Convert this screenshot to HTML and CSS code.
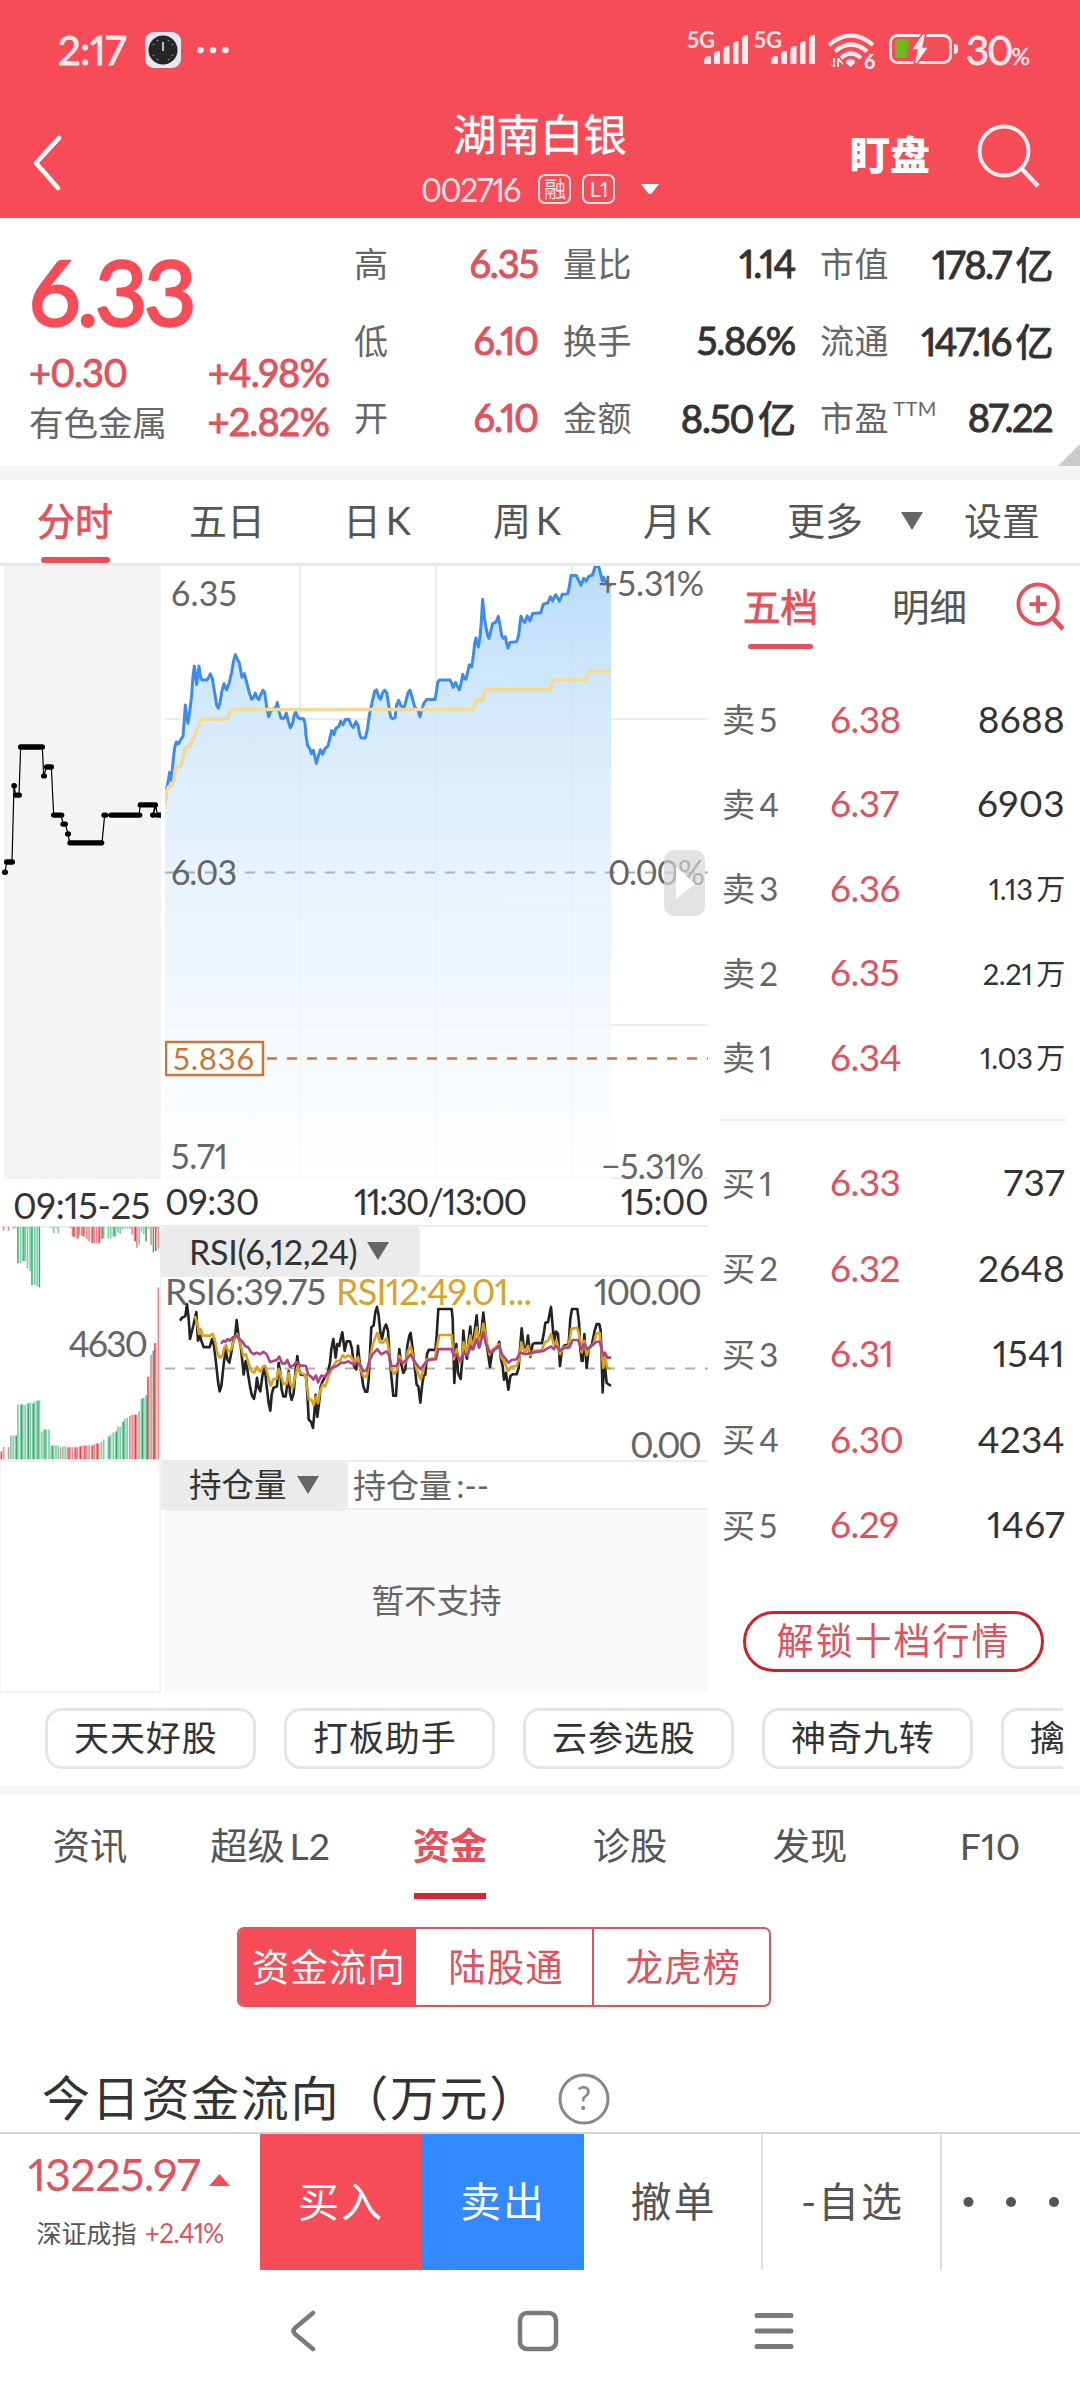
FILE: index.html
```html
<!DOCTYPE html>
<html lang="zh-CN">
<head>
<meta charset="utf-8">
<title>湖南白银 002716</title>
<link rel="stylesheet" href="styles.css">
</head>
<body>
<div class="app">
  <header class="header">
    <div class="status">
      <span class="clock">2:17</span>
      <svg class="app-icon" width="36" height="36" viewBox="0 0 36 36"><rect width="36" height="36" rx="9" fill="#e4e8f2"/><circle cx="18" cy="18" r="14.5" fill="#262626"/><path d="M18 10v9" stroke="#bbb" stroke-width="2"/><g fill="#999"><circle cx="12.500" cy="8.500" r=".8"/><circle cx="23.500" cy="8.500" r=".8"/><circle cx="8.500" cy="12.500" r=".8"/><circle cx="27.500" cy="12.500" r=".8"/><circle cx="8.500" cy="23.500" r=".8"/><circle cx="27.500" cy="23.500" r=".8"/><circle cx="12.500" cy="27.500" r=".8"/><circle cx="23.500" cy="27.500" r=".8"/></g></svg>
      <svg class="more-dots" width="32" height="8" viewBox="0 0 32 8" fill="#ffe9eb"><circle cx="3.500" cy="4" r="3.300"/><circle cx="16" cy="4" r="3.300"/><circle cx="28.500" cy="4" r="3.300"/></svg>
      <svg class="indicators" width="276" height="40" viewBox="684 31 276 40" fill="#ffe9eb">
        <text x="687" y="49" class="net" textLength="28" lengthAdjust="spacingAndGlyphs">5G</text>
        <path id="bars" d="M704 65v-4q0-2 3-4h3q1 0 1 1v7zM714 65V54q2-2 4-2h2v13zM723.500 65V49q2-2 4-2h2v18zM733 65V44q2-2 4-2h1.500v23zM742 65V39q2-3 4-3h2v29z"/>
        <text x="754" y="49" class="net" textLength="28" lengthAdjust="spacingAndGlyphs">5G</text>
        <use href="#bars" x="67"/>
        <g fill="none" stroke="#ffe9eb" stroke-width="4.200"><path d="M829 46q22-19 44 0"/><path d="M835 52.500q16-14 32 0"/><path d="M841 59q10-9 20 0"/></g>
        <path d="M846 62q5-4 9 0v2l-4.500 4-4.500-4z"/>
        <path d="M828 62l5 5V59h2v9h-2zM837 68v-9h2l4 5v2l-4-4v6z"/>
        <text x="864" y="70" class="wifi6">6</text>
        <rect x="890.500" y="36.500" width="60" height="27" rx="7" fill="none" stroke="#ffe9eb" stroke-width="3"/>
        <path d="M898 40h12l-2 5 2 1-4 7 3 2-4 4h-7q-3 0-3-3V43q0-3 3-3z" fill="#6cb81d"/>
        <path d="M922 35l-11 16h6l-3 14h3l12-17h-6l3-13z" stroke="#f54c58" stroke-width="1.500"/>
        <path d="M954 45q4 0 4 3v4q0 3-4 3z"/>
      </svg>
      <span class="battery">30<small>%</small></span>
    </div>
    <div class="titlebar">
      <svg class="back" width="32" height="56" viewBox="0 0 32 56"><path d="M27 3L4 28l22 25" fill="none" stroke="#fff" stroke-width="4.500" stroke-linecap="round" stroke-linejoin="round"/></svg>
      <div class="title">
        <h1>湖南白银</h1>
        <div class="code"><span>002716</span><b>融</b><b>L1</b><svg width="18" height="11" viewBox="0 0 18 11"><path d="M0 0h18l-7 9q-2 2-4 0z" fill="#fff"/></svg></div>
      </div>
      <span class="watch">盯盘</span>
      <svg class="search" width="64" height="64" viewBox="0 0 64 64" fill="none" stroke="#fff0f1"><circle cx="27" cy="27" r="24.500" stroke-width="3.800"/><path d="M44 44l17 18" stroke-width="4.500"/></svg>
    </div>
  </header>

  <section class="quote">
    <div class="price">
      <div class="last">6.33</div>
      <div class="pair"><span>+0.30</span><span>+4.98%</span></div>
      <div class="pair"><em>有色金属</em><span>+2.82%</span></div>
    </div>
    <dl class="stats c1"><div><dt>高</dt><dd>6.35</dd></div><div><dt>低</dt><dd>6.10</dd></div><div><dt>开</dt><dd>6.10</dd></div></dl>
    <dl class="stats c2"><div><dt>量比</dt><dd>1.14</dd></div><div><dt>换手</dt><dd>5.86%</dd></div><div><dt>金额</dt><dd>8.50亿</dd></div></dl>
    <dl class="stats c3"><div><dt>市值</dt><dd>178.7亿</dd></div><div><dt>流通</dt><dd>147.16亿</dd></div><div><dt>市盈<sup>TTM</sup></dt><dd>87.22</dd></div></dl>
    <i class="corner"></i>
  </section>

  <nav class="periods">
    <a class="on">分时</a><a>五日</a><a>日K</a><a>周K</a><a>月K</a><a>更多</a>
    <svg class="caret" width="22" height="18" viewBox="0 0 22 18"><path d="M0 0h22L11 18z" fill="#666"/></svg>
    <a class="set">设置</a>
  </nav>

  <main class="market">
    <div class="pre">
      <svg width="161" height="613" viewBox="0 566 161 613">
        <rect x="4" y="566" width="157" height="613" fill="#f4f4f4"/>
        <g transform="translate(0 560) scale(.33333 .40816)" class="auction">
          <path class="thin" d="M15 765L20 740H36L42 553L47 576H57L62 458H127L131 529L140 507H154L161 625H183L190 647H196L204 671L209 693H306L314 625H417L421 600H465L459 625L468 602L472 625H482"/>
          <path class="thick" d="M14 765h2M20 740h17M42 553h1M47 576h11M62 458h65M131 529h2M140 507h14M161 625h24M189 647h7M203 671h2M210 693h95M312 625h5M333 625h86M421 600h45M458 625h2M472 625h10"/>
        </g>
      </svg>
      <div class="pre-time">09:15-25</div>
      <svg class="volume" width="161" height="235" viewBox="0 1225 161 235">
        <path d="M0 1226h161" stroke="#ececec" stroke-width="2"/>
        <g transform="translate(0 1170) scale(.33333 .33806)" class="vol">
          <path class="g" d="M33 858V787M40 858V787M47 858V787M54 858V695M62 858V695M69 858V695M76 858V695M83 858V692M91 858V689M98 858V692M105 858V686M112 858V683M119 858V683M126 858V775M133 858V769M140 858V769M148 858V769M155 858V817M162 858V817M169 858V817M176 858V817M190 858V820M197 858V820M306 858V806M313 858V799M327 858V790M334 858V784M342 858V778M349 858V775M356 858V760M363 858V760M370 858V746M377 858V737M384 858V734M420 858V716M427 858V677M434 858V675M441 858V667M463 858V535"/>
          <path class="g" d="M40 166v6M47 166v4M54 166V274M62 166V274M69 166V268M76 166V268M83 166V290M91 166V298M98 166V340M105 166V338M112 166V343M119 166V346M155 166v4M162 166V185M169 166v4M176 166V185M313 166V201M327 166V201M334 166V201M342 166V195M349 166V195M356 166V183M363 166V187M370 166V175M377 166V170M384 166V170M420 166V219M427 166V180M434 166V187M441 166V209M463 166V242"/>
          <path class="r" d="M4 858V835M11 858V821M26 858V821M183 858V822M204 858V822M211 858V822M218 858V822M226 858V822M233 858V822M240 858V820M247 858V817M254 858V817M262 858V817M269 858V817M277 858V817M284 858V814M291 858V811M298 858V811M392 858V728M399 858V725M406 858V725M413 858V725M449 858V612M456 858V547M470 858V512M478 858V346"/>
          <path class="r" d="M11 166V178M26 166V178M213 166v4M219 166V195M226 166V198M233 166V201M240 166V192M247 166V192M254 166V195M262 166V203M269 166V210M277 166V215M284 166V215M291 166V215M298 166V215M306 166V203M392 166V172M399 166V189M406 166V209M413 166V228M449 166V172M456 166V219M470 166V238M478 166V231"/>
          <path class="gd" d="M50 858V787M65 858V695M86 858V692M101 858V692M115 858V683M136 858V769M158 858V817M330 858V790M352 858V775M373 858V746M430 858V677M444 858V667M463 858V535M54 166V274M72 166V268M96 166V340M119 166V346M310 166V201M345 166V195M441 166V209M463 166V242"/>
          <path class="rd" d="M4 858V835M208 858V822M229 858V822M243 858V820M257 858V817M280 858V817M294 858V811M409 858V725M446 858V612M467 858V512M222 166V195M236 166V201M251 166V195M280 166V215M301 166V215M409 166V209M470 166V238"/>
        </g>
        <text x="69" y="1357" class="axis" font-size="36" textLength="80">4630</text>
      </svg>
      <div class="pre-blank"></div>
    </div>

    <div class="charts">
      <svg width="543" height="613" viewBox="165 566 543 613">
        <defs><linearGradient id="area" x1="0" y1="15" x2="0" y2="1517" gradientUnits="userSpaceOnUse"><stop offset="0" stop-color="#b4d9f6" stop-opacity=".92"/><stop offset=".25" stop-color="#cfe7fc" stop-opacity=".86"/><stop offset=".5" stop-color="#e3f1fd" stop-opacity=".84"/><stop offset=".75" stop-color="#f1f8fe" stop-opacity=".82"/><stop offset="1" stop-color="#ffffff" stop-opacity=".75"/></linearGradient></defs>
        <path d="M300 566v613M436 566v613M572 566v613M165 719h543M165 1025h543M165 1178h543" stroke="#ececec" stroke-width="2" fill="none"/>
        <g transform="translate(0 560) scale(.33333 .40816)">
          <path fill="url(#area)" d="M495 600L505 540L509 520L514 540L519 495L529 446L536 450L549 432L556 355L564 400L570 365L583 260L590 305L597 260L606 294H620L631 279L637 290L650 355L655 363L660 350L672 303L680 318L695 275L706 232L718 252L726 287L733 278L755 341L766 326L776 342L789 319L806 384L832 349L843 388H852L859 375L871 411L887 372L900 389H911L923 455L949 498L961 465L968 476L984 456L995 418L1036 391L1046 390L1060 410L1068 396L1084 436H1096L1116 350L1124 322L1142 341L1154 319L1172 385L1185 386L1196 344L1212 362L1230 319L1260 384L1280 342H1305L1318 294H1350L1360 312L1378 318L1388 280L1398 292L1408 257L1415 262L1428 191L1435 213L1448 96L1467 192L1478 156L1495 138L1510 192L1524 216L1530 202L1550 200L1563 138L1574 153L1598 131L1622 129L1630 108L1678 101L1687 84H1703L1713 38H1729L1743 62L1785 17H1796L1807 52L1833 64V1517H495Z"/>
          <path class="line" d="M495 600L500 560L505 540L509 520L514 540L519 495L524 460L529 446L536 450L542 440L549 432L553 390L556 355L560 385L564 400L570 365L575 330L579 285L583 260L590 305L597 260L601 285L606 294H620L626 288L631 279L637 290L643 320L650 355L655 363L660 350L666 320L672 303L680 318L688 300L695 275L700 250L706 232L712 243L718 252L722 270L726 287L733 278L740 300L748 325L755 341L760 338L766 326L771 337L776 342L782 330L789 319L794 325L800 360L806 384L812 370L820 366L828 360L832 349L837 370L843 388H852L859 375L864 393L871 411L878 400L882 382L887 372L893 385L900 389H911L915 400L918 430L923 455L930 463L934 475L940 466L949 498L955 480L961 465L968 476L975 462L984 456L990 435L995 418L1002 428L1008 412L1016 408L1022 395L1029 404L1036 391L1046 390L1054 405L1060 410L1068 396L1074 405L1080 430L1084 436H1096L1102 415L1108 380L1116 350L1124 322L1130 318L1136 335L1142 341L1148 325L1154 319L1160 325L1166 355L1172 385L1178 389L1185 386L1190 355L1196 344L1203 358L1212 362L1218 345L1224 325L1230 319L1236 335L1244 360L1254 368L1260 384L1266 365L1272 350L1280 342H1305L1309 325L1313 300L1318 294H1350L1355 302L1360 312L1367 300L1372 310L1378 318L1384 300L1388 280L1393 290L1398 292L1403 275L1408 257L1415 262L1420 235L1424 205L1428 191L1435 213L1440 190L1444 150L1448 96L1453 140L1458 165L1463 185L1467 192L1472 175L1478 156L1488 152L1495 138L1500 160L1505 185L1510 192L1516 188L1520 205L1524 216L1530 202L1550 200L1556 185L1560 155L1563 138L1568 148L1574 153L1582 137L1590 149L1598 131L1622 129L1630 108L1644 105L1651 90L1658 101L1667 85L1678 101L1687 84L1703 83L1708 65L1713 38H1729L1735 48L1743 62L1751 45L1759 52L1766 40L1778 37L1785 17L1796 15L1802 35L1807 52L1811 42L1818 55L1833 64"/>
          <path class="avg" d="M495 600L500 565L506 555L516 552L522 540L526 512L532 507L543 505L550 480L555 460L570 456L576 440L583 435L590 415L596 408L603 390L684 389L690 370L696 366H1420L1428 343H1448L1456 318H1650L1658 294H1758L1766 272H1833"/>
        </g>
        <path d="M165 872.500h543" stroke="#b0b0b0" stroke-width="2" stroke-dasharray="10 10"/>
        <path d="M267 1058.500h441" stroke="#ce7535" stroke-width="2.500" stroke-dasharray="10 10"/>
        <rect x="166" y="1042" width="97" height="33" fill="#fff" stroke="#ce7535" stroke-width="2.500"/>
        <text x="173" y="1070" font-size="31" textLength="81" fill="#ce7535">5.836</text>
        <g class="axis" font-size="34">
          <text x="171" y="606" textLength="66">6.35</text><text x="171" y="885" textLength="66">6.03</text><text x="171" y="1169" textLength="57">5.71</text>
          <text x="598" y="596" textLength="106">+5.31%</text><text x="608" y="885" textLength="97">0.00%</text><text x="601" y="1179" textLength="103">−5.31%</text>
        </g>
        <rect x="664" y="850" width="41" height="66" rx="10" fill="#d5d5d5" fill-opacity=".68"/>
        <path d="M676 867v32l19-15z" fill="#fff"/>
      </svg>
      <div class="times"><span>09:30</span><span class="mid">11:30/13:00</span><span>15:00</span></div>
      <div class="ind-head"><div class="tag rsi">RSI(6,12,24)<svg width="22" height="18" viewBox="0 0 22 18"><path d="M0 0h22L11 18z" fill="#666"/></svg></div></div>
      <svg width="543" height="183" viewBox="165 1277 543 183">
        <path d="M165 1368.500h543" stroke="#b0b0b0" stroke-width="2" stroke-dasharray="10 10"/>
        <text x="165" y="1305" font-size="36" fill="#666" textLength="161">RSI6:39.75</text>
        <text x="336" y="1305" font-size="36" fill="#d9a32b" textLength="196">RSI12:49.01...</text>
        <g class="axis" font-size="36"><text x="594" y="1305" textLength="108">100.00</text><text x="630" y="1458" textLength="72">0.00</text></g>
        <g transform="translate(0 1170) scale(.33333 .33806)" class="osc">
          <path stroke="#222" d="M540 446L546 437L556 432L561 397L566 440L570 500L580 460L589 420L594 505L600 490L605 508L611 524H629L636 500L642 520L648 570L654 625L659 655L664 640L671 575L677 530L682 560L688 570L694 540L700 505L705 495L710 444L716 495L722 520L728 575L731 605L737 565L742 590L750 640L756 668L762 677L767 650L771 615L776 645L781 655L787 610L794 580L800 640L806 690L811 712L815 665L820 645L831 640L836 570L841 600L845 650L850 670H857L861 640L866 595L870 660L875 680L881 660L886 600L892 550L897 590L902 605L918 608L922 660L926 738L933 745L939 763L943 720L947 665L952 730L957 690L962 640L968 625L976 610L984 598L990 570L994 530L1000 500L1007 555L1012 515L1018 520L1022 500L1027 480L1034 535L1040 507H1050L1056 530L1062 580L1069 590L1074 520L1080 580L1085 605L1090 640L1096 656H1102L1106 620L1110 540L1114 465L1121 460L1126 420L1131 405L1136 430L1141 480L1146 500L1152 470L1158 457L1164 475L1168 540L1174 610L1180 668H1188L1192 600L1198 530L1204 575L1210 600L1216 590L1222 520L1228 490L1232 482L1238 530L1244 580L1250 635L1255 640L1261 688L1266 640L1271 608L1276 605L1281 545L1286 532H1306L1310 490L1315 411H1355L1358 440L1361 560L1363 630L1369 515L1374 600L1382 618L1387 560L1390 475L1396 540L1401 558L1406 500L1411 463L1416 530L1422 490L1430 430L1437 525L1444 480L1450 422L1456 480L1462 530L1470 583L1476 540L1484 530L1492 525L1498 508L1503 560L1508 580L1512 620L1518 600L1525 650L1531 610L1538 604H1550L1556 585L1560 530L1565 468L1571 520L1578 535L1584 490L1591 553L1598 515L1604 512H1626L1632 480L1636 452L1644 450L1648 430L1653 405L1657 450L1662 510L1668 478L1674 485L1680 580L1686 530L1692 520L1706 515L1711 440L1716 411H1732L1737 450L1741 530L1745 565H1748L1753 485L1760 585L1766 530L1776 515L1784 475L1790 456H1798L1802 475L1805 560L1808 658L1813 560L1820 630L1833 639"/>
          <path stroke="#dba11c" d="M585 432L592 455L597 485L602 470L608 490H630L638 485L645 505L652 540L659 555L667 550L673 525L678 518L685 538L694 530L702 505L711 485L718 500L724 525L730 550L738 545L745 570L754 595L763 600L771 582L780 597L790 580H796L803 605L812 638L820 620L830 617L836 588L843 610L850 632H860L866 600L872 635L878 645L886 610L893 580L900 600L916 606L921 640L927 680H935L941 695L948 670L954 690L960 655L968 635L976 640L986 610L996 585L1003 575L1010 565H1020L1028 548L1035 555L1045 548L1055 555L1064 575L1074 553L1080 585L1090 610L1100 612L1108 570L1116 525L1124 500L1132 482L1140 510H1150L1160 497L1166 530L1174 590L1184 603L1192 590L1198 550L1208 570L1215 572L1224 535L1232 522L1240 555L1250 590L1262 620L1270 590L1280 560L1305 557L1311 520L1318 488H1355L1361 560L1370 530L1380 570L1386 550L1391 510L1400 545L1411 490L1418 530L1430 465L1440 520L1450 455L1458 495L1468 545L1480 530L1497 515L1505 555L1514 570L1524 595L1533 582L1550 580L1558 560L1564 510L1574 540L1584 520L1592 550L1600 535L1625 533L1634 510L1644 505L1653 485L1662 518L1670 505L1680 545L1690 525L1706 520L1714 470L1732 467L1738 490L1745 540L1753 505L1760 548L1768 525L1780 515L1790 482H1799L1804 530L1810 585L1815 555L1822 585L1833 589"/>
          <path stroke="#b04287" d="M663 514L670 505L676 508L684 500L690 505L698 495L710 490L718 500L728 508L735 520L745 525L754 540L763 545L770 540L780 545L790 538L800 545L810 568L830 562L838 552L846 572H856L862 562L870 582L878 580L890 568L900 578L918 580L924 605L934 612L940 620L948 608L954 628L964 608L976 612L984 600L996 585L1010 580L1024 570H1034L1045 566L1062 576L1070 570L1080 575L1090 595L1100 593L1108 565L1118 545L1132 530L1143 545L1160 537L1166 545L1174 580H1190L1198 560L1208 572L1220 560L1232 545L1242 565L1250 575L1262 590L1272 575L1285 562L1308 560L1315 530H1355L1361 550L1370 545L1380 565L1392 540L1402 550L1412 520L1420 530L1430 500L1438 525L1450 480L1458 515L1470 540L1485 530L1497 520L1506 545L1514 555L1525 570L1535 562L1550 560L1560 540L1575 545L1600 540L1630 535L1653 522L1662 530L1668 520L1680 535L1690 527L1708 525L1718 503H1734L1744 530L1753 515L1762 530L1775 520L1790 508H1800L1810 550L1815 540L1822 555H1833"/>
        </g>
      </svg>
      <div class="ind-head pos"><div class="tag oi">持仓量<svg width="22" height="18" viewBox="0 0 22 18"><path d="M0 0h22L11 18z" fill="#666"/></svg></div><span>持仓量:--</span></div>
      <div class="unsupported">暂不支持</div>
    </div>

    <aside class="book">
      <div class="book-tabs"><a class="on">五档</a><a>明细</a><svg width="48" height="52" viewBox="0 0 50 54" fill="none" stroke="#e5505b" stroke-width="4"><circle cx="23" cy="23" r="20.500"/><path d="M38 37l11 12" stroke-width="5"/><path d="M23 14v18M14 23h18"/></svg></div>
      <ul class="levels asks">
        <li><span>卖5</span><b>6.38</b><i>8688</i></li>
        <li><span>卖4</span><b>6.37</b><i>6903</i></li>
        <li><span>卖3</span><b>6.36</b><i class="wan">1.13万</i></li>
        <li><span>卖2</span><b>6.35</b><i class="wan">2.21万</i></li>
        <li><span>卖1</span><b>6.34</b><i class="wan">1.03万</i></li>
      </ul>
      <ul class="levels bids">
        <li><span>买1</span><b>6.33</b><i>737</i></li>
        <li><span>买2</span><b>6.32</b><i>2648</i></li>
        <li><span>买3</span><b>6.31</b><i>1541</i></li>
        <li><span>买4</span><b>6.30</b><i>4234</i></li>
        <li><span>买5</span><b>6.29</b><i>1467</i></li>
      </ul>
      <a class="unlock">解锁十档行情</a>
    </aside>
  </main>

  <div class="chips"><a>天天好股</a><a>打板助手</a><a>云参选股</a><a>神奇九转</a><a>擒龙</a></div>

  <nav class="sections"><a>资讯</a><a>超级L2</a><a class="on">资金</a><a>诊股</a><a>发现</a><a>F10</a></nav>

  <section class="funds">
    <div class="segment"><a class="on">资金流向</a><a>陆股通</a><a>龙虎榜</a></div>
    <div class="funds-title"><h2>今日资金流向（万元）</h2><svg width="52" height="52" viewBox="0 0 52 52"><circle cx="26" cy="26" r="24" fill="none" stroke="#888" stroke-width="3"/><text x="26" y="37" text-anchor="middle" font-size="32" fill="#888">?</text></svg></div>
  </section>

  <footer class="trade">
    <div class="index"><div class="idx-val">13225.97<svg width="21" height="12" viewBox="0 0 21 12"><path d="M10.500 0L21 12H0z" fill="#f44c58"/></svg></div><div class="idx-name">深证成指 <span>+2.41%</span></div></div>
    <a class="buy">买入</a><a class="sell">卖出</a><a class="plain">撤单</a><a class="plain">-自选</a>
    <a class="dots"><svg width="96" height="12" viewBox="0 0 96 12" fill="#555"><circle cx="5.500" cy="6" r="5"/><circle cx="48" cy="6" r="5"/><circle cx="91" cy="6" r="5"/></svg></a>
  </footer>
  <div class="sysnav">
    <svg width="28" height="44" viewBox="0 0 28 44"><path d="M24 4L6 19q-3 3 0 6l18 15" fill="none" stroke="#7a7a7a" stroke-width="4.500" stroke-linecap="round"/></svg>
    <svg width="42" height="42" viewBox="0 0 42 42"><rect x="3" y="3" width="36" height="36" rx="7" fill="none" stroke="#7a7a7a" stroke-width="4.500"/></svg>
    <svg width="40" height="38" viewBox="0 0 40 38"><path d="M3 3.500h34M3 19h34M3 34.500h34" stroke="#7a7a7a" stroke-width="5" stroke-linecap="round"/></svg>
  </div>
</div>
</body>
</html>
```
FILE: styles.css
```css
* { box-sizing: border-box; }
body { margin: 0; background: #fff; }
h1, h2, dl, dd, ul, li { margin: 0; padding: 0; font-weight: 400; }
ul { list-style: none; }
i, em { font-style: normal; }
svg { display: block; flex: none; }
.app {
  width: 1080px; height: 2400px; overflow: hidden;
  display: flex; flex-direction: column;
  font-family: Lato, "Noto Sans CJK SC", sans-serif;
  font-variant-numeric: proportional-nums;
  text-autospace: normal;
  color: #333; white-space: nowrap;
}
.app > * { flex: none; }

.header { height: 218px; background: #f54c58; color: #fff; }
.status { height: 100px; display: flex; align-items: center; padding: 0 50px 0 58px; color: #ffe9eb; }
.clock { font-size: 40px; -webkit-text-stroke: .8px; width: 87px; letter-spacing: -.4px; }
.more-dots { margin-left: 16px; }
.indicators { margin-left: auto; overflow: visible; }
.net { font-size: 22px; font-weight: 700; }
.wifi6 { font-size: 20px; font-weight: 900; }
.battery { font-size: 40px; -webkit-text-stroke: .8px; margin-left: 6px; width: 64px; letter-spacing: -2px; }
.battery small { font-size: 23px; -webkit-text-stroke: .5px; }
.titlebar { height: 118px; display: flex; padding: 0 39px 0 32px; }
.back { margin-top: 35px; }
.title { flex: 1; padding-left: 357px; }
.title h1 { font-size: 43.500px; line-height: 50px; margin: 9px 0 0 32px; -webkit-text-stroke: .4px; }
.code { display: flex; align-items: center; height: 36px; margin-top: 12px; font-size: 32px; letter-spacing: -1.500px; color: #ffe3e5; }
.code span { width: 117px; }
.code b { width: 33px; height: 30px; margin-right: 11px; border: 2px solid #ffe3e5; border-radius: 7px; font-size: 22px; line-height: 25px; text-align: center; font-weight: 400; letter-spacing: -1px; }
.code svg { margin-left: 15px; }
.watch { font-size: 40px; font-weight: 900; line-height: 50px; margin: 30px 47px 0 0; }
.search { margin-top: 24px; }

.quote { position: relative; height: 262px; border-bottom: 14px solid #f5f5f5; display: flex; padding-top: 6px; }
.price { width: 354px; padding-left: 29px; color: #e0525d; }
.last { font-size: 91px; line-height: 100px; margin-top: 17px; -webkit-text-stroke: 2.500px; letter-spacing: -3.500px; color: #f54c58; }
.pair { display: flex; justify-content: space-between; width: 300px; height: 49px; align-items: center; font-size: 38px; -webkit-text-stroke: .9px; letter-spacing: -.9px; }
.last + .pair { margin-top: 6px; }
.pair em { font-size: 34.500px; color: #666; letter-spacing: 0; -webkit-text-stroke: 0; }
.stats div { display: flex; justify-content: space-between; align-items: center; height: 77px; }
.stats dt { font-size: 34px; color: #666; letter-spacing: .5px; }
.stats dd { font-size: 38px; -webkit-text-stroke: 1px; letter-spacing: -1.100px; }
.stats dt sup { font-size: 20px; line-height: 10px; vertical-align: 15px; }
.c1 { width: 184px; }
.c1 dd { color: #e0525d; }
.c2 { width: 232px; margin-left: 25px; }
.c3 { width: 232px; margin-left: 25px; }
.c3 dd { letter-spacing: -1.500px; }
.c3 dd, .c2 dd { color: #333; }
.corner { position: absolute; right: 0; bottom: 0; border: solid transparent; border-width: 22px 0 0 22px; border-bottom: 22px solid #ccc; border-top: 0; }

.periods { height: 86px; display: flex; align-items: center; border-bottom: 3px solid #e9e9e9; font-size: 38px; color: #555; }
.periods a { width: 150px; height: 83px; line-height: 81px; text-align: center; }
.periods a + a { padding-left: 4px; }
.periods a:nth-child(6) { padding-left: 0; }
.periods .set { width: 80px; margin-left: 39px; }
.periods .caret { margin-left: 1px; margin-top: -2px; }
.periods .on, .book-tabs .on { position: relative; color: #e5505b; -webkit-text-stroke: .8px; }
.periods .on::after { content: ""; position: absolute; left: 41px; bottom: 0; width: 69px; height: 6px; border-radius: 3px; background: #e5505b; }

.market { display: flex; height: 1127px; }
.pre { width: 161px; margin-right: 4px; }
.pre-time { height: 46px; padding: 0 10px 0 12px; font-size: 36px; line-height: 53px; letter-spacing: -.3px; text-align: center; }
.volume { border-right: 1px solid #eee; }
.pre-blank { height: 233px; border: 2px solid #f2f2f2; border-left-width: 1px; }
.thin, .thick, .line, .avg, .osc path, .vol path { fill: none; vector-effect: non-scaling-stroke; stroke-linejoin: round; }
.thin { stroke: #000; stroke-width: 1.200; }
.thick { stroke: #000; stroke-width: 5.400; stroke-linecap: round; }
.g { stroke: #7fd0a8; stroke-width: 1.700; }
.r { stroke: #f08a8e; stroke-width: 1.700; }
.gd { stroke: #3f9c6c; stroke-width: 1; }
.rd { stroke: #c4494f; stroke-width: 1; }
.line { stroke: #3d8bea; stroke-width: 3; }
.avg { stroke: #f5da95; stroke-width: 3.500; }
.osc path { stroke-width: 2.600; }
.axis { fill: #666; }
.charts { width: 543px; }
.times { display: flex; justify-content: space-between; height: 46px; font-size: 36px; line-height: 44px; letter-spacing: -.6px; }
.times .mid { letter-spacing: -1.600px; }
.ind-head { height: 52px; margin-left: -4px; border-top: 2px solid #ececec; border-bottom: 2px solid #ececec; display: flex; align-items: center; }
.tag { height: 51px; padding-left: 28px; border-radius: 6px; background: #ebebeb; display: flex; align-items: center; font-size: 34px; }
.tag svg { margin-left: 10px; }
.rsi { width: 259px; letter-spacing: -.25px; }
.pos { height: 50px; color: #666; font-size: 33px; }
.pos span { margin-left: 5px; line-height: 44px; }
.oi { width: 187px; font-size: 32.500px; line-height: 44px; color: #333; padding-bottom: 1px; }
.unsupported { height: 183px; line-height: 182px; background: #fafafa; text-align: center; font-size: 32.500px; color: #666; }

.book { width: 358px; margin-left: 13px; }
.book-tabs { height: 84px; display: flex; font-size: 37.500px; line-height: 81px; color: #555; }
.book-tabs a { width: 75px; margin-left: 22px; }
.book-tabs a + a { margin-left: 74px; }
.book-tabs svg { margin: 16px 0 0 49px; }
.book-tabs .on::after { content: ""; position: absolute; left: 5px; bottom: 1px; width: 65px; height: 5px; border-radius: 3px; background: #e5505b; }
.levels { width: 345px; }
.levels li { display: grid; grid-template-columns: 108px 90px 1fr; align-items: center; height: 84.500px; padding: 0 1px 0 1px; font-size: 37px; }
.levels span { font-size: 33px; color: #666; }
.levels b { font-weight: 400; color: #e0525d; letter-spacing: -.5px; }
.levels i { text-align: right; letter-spacing: .3px; }
.levels .wan { font-size: 29px; letter-spacing: -.3px; }
.asks { padding-top: 26px; height: 471px; border-bottom: 2px solid #ececec; }
.bids { padding-top: 18px; height: 490px; }
.bids li { height: 85.500px; }
.unlock { display: block; width: 301px; height: 61px; margin-left: 22px; border: 3px solid #cf2027; border-radius: 31px; color: #e0525d; font-size: 37px; letter-spacing: 2px; line-height: 53px; text-align: center; }

.chips { display: flex; gap: 28px; height: 93px; margin-right: 17px; padding: 15px 0 0 45px; overflow: hidden; }
.chips a { flex: none; width: 211px; height: 61px; padding-left: 26px; border: 3px solid #e5e5e5; border-radius: 17px; font-size: 35px; line-height: 53px; letter-spacing: .9px; }
.sections { display: flex; height: 113px; border-top: 8px solid #f5f5f5; font-size: 37.300px; line-height: 104px; color: #555; }
.sections a { position: relative; width: 180px; text-align: center; }
.sections .on { color: #e5505b; font-weight: 700; }
.sections .on::after { content: ""; position: absolute; left: 54px; bottom: 0; width: 72px; height: 6px; background: #dc2430; }
.funds { height: 233px; overflow: hidden; }
.segment { display: flex; width: 534px; height: 80px; margin: 28px 0 0 237px; border: 2px solid #e0525d; border-radius: 7px; overflow: hidden; color: #e0525d; font-size: 37.500px; line-height: 75px; text-align: center; letter-spacing: 1px; }
.segment a { flex: 1; border-left: 2px solid #e0525d; padding-left: 4px; }
.segment .on { border: 0; background: #f54c58; color: #fff; }
.funds-title { display: flex; align-items: center; margin: 57px 0 0 42px; height: 70px; }
.funds-title h2 { font-size: 48px; letter-spacing: 1.700px; line-height: 66px; margin-top: -2px; }
.funds-title svg { margin-left: 19px; }

.trade { display: flex; height: 138px; border-top: 2px solid #d4d4d4; background: #fff; text-align: center; font-size: 41px; line-height: 136px; letter-spacing: 2px; }
.index { width: 260px; line-height: 1; letter-spacing: 0; color: #e0525d; }
.idx-val { display: flex; align-items: center; height: 50px; padding-left: 28px; margin-top: 15px; font-size: 45px; letter-spacing: -.7px; }
.idx-val svg { margin: 12px 0 0 9px; }
.idx-name { margin-top: 18px; font-size: 25px; line-height: 32px; color: #555; }
.idx-name span { color: #e0525d; margin-left: 2px; font-size: 26px; letter-spacing: -.6px; }
.buy, .sell { width: 162px; color: #fff; background: #f54c58; }
.sell { background: #338aff; }
.plain { width: 179px; border-right: 2px solid #e0e0e0; color: #555; padding-left: 2px; }
.dots { flex: 1; display: flex; align-items: center; justify-content: center; }
.sysnav { height: 130px; display: flex; align-items: center; padding: 0 0 8px 289px; }
.sysnav svg + svg { margin-left: 200px; }
.sysnav svg:last-child { margin-left: 195px; }
```
